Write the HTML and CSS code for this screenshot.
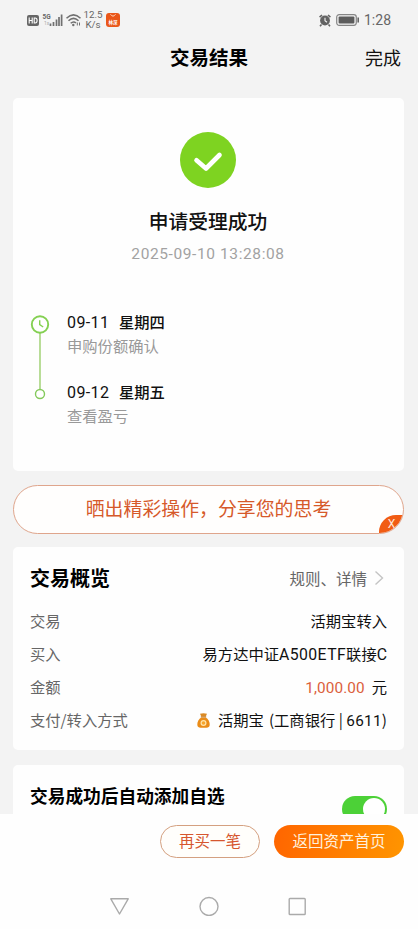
FILE: index.html
```
<!DOCTYPE html>
<html lang="zh-CN">
<head>
<meta charset="utf-8">
<meta name="viewport" content="width=device-width, initial-scale=1">
<title>交易结果</title>
<link rel="stylesheet" href="styles.css">
</head>
<body>
<div class="screen">
  <div class="status">
    <svg class="signals" width="55" height="16" viewBox="0 0 55 16">
      <rect x="0" y="3" width="12" height="11" rx="2" fill="#666"/>
      <path d="M2.200 5.500v6M5.200 5.500v6M2.200 8.500h3M7.200 6v5h.9c1.400 0 2-1 2-2.500S9.500 6 8.100 6z" fill="none" stroke="#fff" stroke-width="1.100"/>
      <text x="15.500" y="7" class="net">5G</text>
      <text x="17" y="13" class="net-sub">1x</text>
      <path d="M23.500 14v-2.500M26.500 14v-4M29.500 14V7.500M32 14V5M34.600 14V2.500" stroke="#707070" stroke-width="1.700"/>
      <path d="M39.500 6.200Q46.500-.5 53.500 6.200M41.500 8.800Q46.500 4 51.500 8.800M43.700 11.300Q46.500 8.700 49 11" fill="none" stroke="#707070" stroke-width="1.500"/>
      <circle cx="46.300" cy="13" r="1.200" fill="#707070"/>
      <path d="M50.300 13.500v-3M52.500 10.500v3" stroke="#707070" stroke-width="1"/>
    </svg>
    <div class="speed"><span>12.5</span><span>K/s</span></div>
    <svg class="app" width="14" height="14" viewBox="0 0 14 14">
      <rect width="14" height="14" rx="3" fill="#ea571a"/>
      <path d="M4.500 1.300Q7 5 9.500 1.300" fill="none" stroke="#ffd8bf" stroke-width="1"/>
      <text x="7" y="10.800" text-anchor="middle" class="app-label">林深</text>
    </svg>
    <svg class="alarm" width="12" height="13" viewBox="0 0 12 13">
      <circle cx="6" cy="6.500" r="4.900" fill="#626262"/>
      <path d="M.6 3.200L3 1M9 1l2.400 2.200M2.500 10.500L1 12.200M9.500 10.500l1.500 1.700" stroke="#626262" stroke-width="1.600"/>
      <path d="M6 3.800v3l2 1.500" fill="none" stroke="#f3f3f3" stroke-width="1.100"/>
    </svg>
    <svg class="battery" width="24" height="12" viewBox="0 0 24 12">
      <rect x=".7" y=".7" width="19.600" height="10.600" rx="2.500" fill="none" stroke="#858585" stroke-width="1.200"/>
      <rect x="2.600" y="2.600" width="15.800" height="6.800" rx="1" fill="#5c5c5c"/>
      <path d="M22.200 3.500v5" stroke="#666" stroke-width="1.600"/>
    </svg>
    <span class="clock">1:28</span>
  </div>

  <header class="header"><span></span><h1>交易结果</h1><a class="done">完成</a></header>

  <main>
    <section class="card result">
      <svg class="check" width="56" height="56" viewBox="0 0 56 56">
        <circle cx="28" cy="28" r="28" fill="#7ed321"/>
        <path d="M16.500 28.200L26 36.500l13.500-13.500" fill="none" stroke="#fff" stroke-width="4.600" stroke-linecap="round" stroke-linejoin="round"/>
      </svg>
      <h2>申请受理成功</h2>
      <time>2025-09-10 13:28:08</time>
      <div class="timeline">
        <svg class="track" width="20" height="88" viewBox="0 0 20 88">
          <path d="M10 18v56" stroke="#9bce6c" stroke-width="1.400"/>
          <circle cx="10" cy="9.500" r="8.200" fill="#fff" stroke="#84d052" stroke-width="1.900"/>
          <path d="M9.700 5.200v4.500l3.500 2.300" fill="none" stroke="#84d052" stroke-width="1.400"/>
          <circle cx="10" cy="79" r="4.500" fill="#fff" stroke="#84c95c" stroke-width="1.400"/>
        </svg>
        <div class="steps">
          <div class="step"><p class="date"><span>09-11</span>星期四</p><p class="note">申购份额确认</p></div>
          <div class="step"><p class="date"><span>09-12</span>星期五</p><p class="note">查看盈亏</p></div>
        </div>
      </div>
    </section>

    <div class="banner">晒出精彩操作，分享您的思考
      <span class="close">X</span>
    </div>

    <section class="card overview">
      <div class="overview-head">
        <h3>交易概览</h3>
        <a>规则、详情</a>
        <svg width="10" height="16" viewBox="0 0 10 16"><path d="M1.500 1.500L8.500 8l-7 6.500" fill="none" stroke="#c4c4c4" stroke-width="1.400"/></svg>
      </div>
      <dl>
        <div class="row"><dt>交易</dt><dd>活期宝转入</dd></div>
        <div class="row"><dt>买入</dt><dd>易方达中证<span class="latin">A500ETF</span>联接<span class="latin">C</span></dd></div>
        <div class="row"><dt>金额</dt><dd><span class="amount">1,000.00</span>元</dd></div>
        <div class="row"><dt>支付/转入方式</dt><dd><svg class="bag" width="13" height="15" viewBox="0 0 13 15">
            <path d="M3 .8Q6.500-.4 10 .8L8.800 3.500H4.200z" fill="#db8a24"/>
            <path d="M4.200 4.500h4.600C11 6 13 8.800 12.700 12c-.2 2-1.400 2.700-3.200 2.700h-6C1.700 14.700.5 14 .3 12 0 8.800 2 6 4.200 4.500z" fill="#ea8c18"/>
            <path d="M3.800 3.900h5.400" stroke="#bd741e" stroke-width="1"/>
            <circle cx="6.500" cy="10" r="2.400" fill="#f7a62d" stroke="#ffe4ac" stroke-width="1.200"/>
          </svg>活期宝<span class="bank">(工商银行 | <span class="digits">6611</span>)</span></dd></div>
      </dl>
    </section>

    <section class="card favorite">
      <h3>交易成功后自动添加自选</h3>
      <span class="switch"><span class="knob"></span></span>
    </section>
  </main>

  <footer>
    <div class="actions">
      <button class="again">再买一笔</button>
      <button class="home">返回资产首页</button>
    </div>
    <nav>
      <svg width="20" height="20" viewBox="0 0 20 20"><path d="M.8 2.800h17.400L9.500 18z" fill="none" stroke="#aaa" stroke-width="1.400" stroke-linejoin="round"/></svg>
      <svg width="20" height="20" viewBox="0 0 20 20"><circle cx="10" cy="10.500" r="9" fill="none" stroke="#aaa" stroke-width="1.400"/></svg>
      <svg width="20" height="20" viewBox="0 0 20 20"><rect x="2.200" y="2.500" width="16" height="16" rx=".8" fill="none" stroke="#aaa" stroke-width="1.400"/></svg>
    </nav>
  </footer>
</div>
</body>
</html>
```
FILE: styles.css
```
* { box-sizing: border-box; margin: 0; padding: 0; }
body { background: #f3f3f3; font-family: "Noto Sans CJK SC", sans-serif; color: #111; }
.screen { width: 418px; height: 929px; display: flex; flex-direction: column; overflow: hidden; }

.status { height: 40px; flex: none; display: flex; align-items: center; padding: 0 27px; color: #666; font-family: Roboto, sans-serif; }
.net { font: bold 6.500px Roboto, sans-serif; fill: #666; }
.net-sub { font: 5px Roboto, sans-serif; fill: #aaa; }
.speed { width: 20px; margin-left: 1px; font-size: 9.800px; line-height: 10px; text-align: center; display: flex; flex-direction: column; white-space: nowrap; }
.app { margin-left: 3px; }
.app-label { font: bold 4.500px "Noto Sans CJK SC", sans-serif; fill: #fff; }
.alarm { margin-left: auto; }
.battery { margin: 0 4px 0 5px; }
.clock { font-size: 14px; width: 27px; white-space: nowrap; }

.header { height: 58px; flex: none; display: grid; grid-template-columns: 1fr auto 1fr; padding: 2px 17px 0 17px; line-height: 30px; }
h1 { font-size: 19.500px; line-height: 30px; font-weight: 700; color: #000; }
.done { font-size: 18px; text-align: right; line-height: 31px; }

main { flex: 1; min-height: 0; overflow: hidden; padding: 0 14px 0 13px; }
.card { background: #fefefe; border-radius: 5px; }
.result { height: 373px; padding: 34px 1px 0 0; display: flex; flex-direction: column; align-items: center; }
.result h2 { font-size: 19.800px; line-height: 30px; font-weight: 500; margin-top: 18px; }
time { font: 15.500px/20px Roboto, sans-serif; color: #a2a2a2; margin-top: 8px; letter-spacing: .6px; }
.timeline { align-self: stretch; display: flex; padding: 48px 17px 0; gap: 17px; }
.track { margin-top: 3px; }
.steps { margin-top: -2px; }
.step { height: 70px; }
.date { font-size: 15.300px; line-height: 22px; font-weight: 500; }
.date span { font-family: Roboto, sans-serif; font-weight: 400; font-size: 16px; display: inline-block; width: 52px; letter-spacing: .4px; }
.note { font-size: 15.300px; line-height: 22px; color: #999; }

.banner { height: 49px; margin: 13.500px 0; border: 1px solid #dfa58c; border-radius: 25px; background: #fffefd; color: #d6592a; font-size: 18.900px; line-height: 44px; text-align: center; position: relative; overflow: hidden; }
.close { position: absolute; right: -1px; bottom: -1px; width: 25px; height: 19px; border-top-left-radius: 17px; background: #f15c14; color: #ffe9dc; font: 12px/18px Roboto, sans-serif; text-align: center; }

.overview { height: 203px; padding: 14px 17px 0; }
.overview-head { display: flex; align-items: center; height: 33px; margin-bottom: 10px; }
.overview h3 { font-size: 20px; font-weight: 700; color: #000; line-height: 30px; margin-right: auto; }
.overview a { font-size: 15.500px; color: #666; }
.overview-head svg { margin: 1px 3px 0 7px; }
.row { display: flex; justify-content: space-between; height: 33px; line-height: 32px; font-size: 15.300px; }
dt { color: #666; }
dd { height: 32px; line-height: 32px; white-space: nowrap; }
.latin { font-family: Roboto, sans-serif; font-size: 15.800px; letter-spacing: .4px; }
.latin:last-child { letter-spacing: 0; }
.digits { font-family: Roboto, sans-serif; letter-spacing: .3px; }
.amount { color: #db603c; font-family: Roboto, sans-serif; letter-spacing: .1px; margin-right: 7px; }
.bag { margin-right: 8px; vertical-align: -2px; }
.bank { margin-left: 5px; }

.favorite { height: 100px; margin-top: 15px; padding: 15px 17px; display: flex; justify-content: space-between; align-items: flex-start; }
.favorite h3 { font-size: 17.700px; line-height: 30px; color: #000; font-weight: 700; }
.switch { width: 45px; height: 26px; border-radius: 13px; background: #4cd137; margin-top: 16px; display: flex; justify-content: flex-end; padding: 2px; }
.knob { width: 22px; height: 22px; border-radius: 50%; background: #fff; }

footer { height: 115px; flex: none; background: #fefefe; padding-top: 11px; }
.actions { display: flex; justify-content: flex-end; gap: 14px; padding-right: 14px; }
button { height: 33px; border-radius: 17px; padding-bottom: 3px; font: 15.500px/28px "Noto Sans CJK SC", sans-serif; }
.again { width: 100px; border: 1px solid #d4a080; background: #fffefb; color: #d6562f; }
.home { width: 130px; border: 0; background: linear-gradient(100deg, #ff6500, #ff9500); color: #fff0dc; }
nav { display: flex; justify-content: space-between; padding: 0 111px 0 110px; margin-top: 38px; }
```
